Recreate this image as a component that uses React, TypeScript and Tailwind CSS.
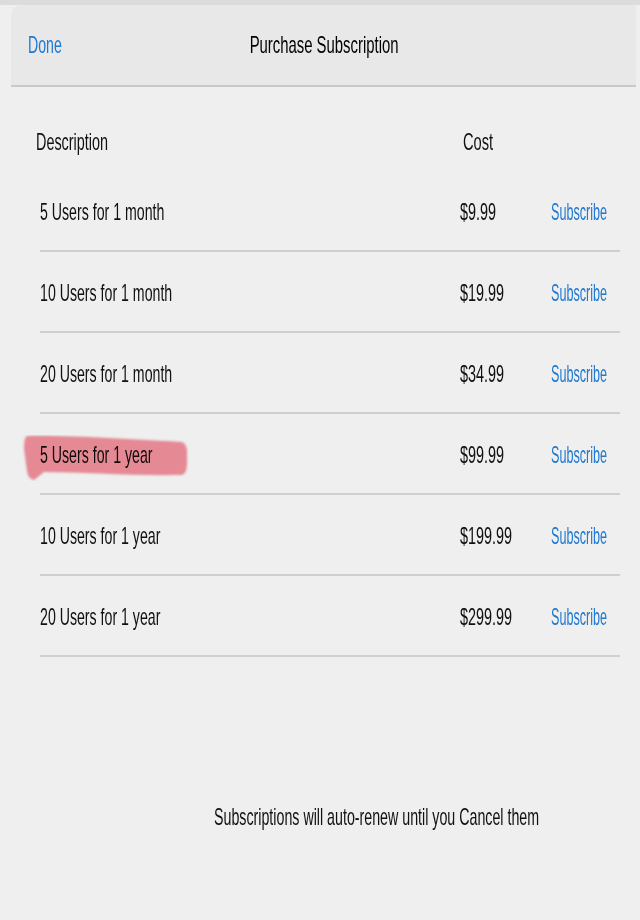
import React from 'react';

type Plan = { label: string; price: string; marked?: boolean };

const plans: Plan[] = [
  { label: '5 Users for 1 month', price: '$9.99' },
  { label: '10 Users for 1 month', price: '$19.99' },
  { label: '20 Users for 1 month', price: '$34.99' },
  { label: '5 Users for 1 year', price: '$99.99', marked: true },
  { label: '10 Users for 1 year', price: '$199.99' },
  { label: '20 Users for 1 year', price: '$299.99' },
];

// the screenshot's type is squeezed horizontally, so each label is narrowed
const Narrow: React.FC<{ children: React.ReactNode; className?: string; squeeze?: string }> = ({
  children,
  className = '',
  squeeze = 'scale-x-[0.59]',
}) => (
  <span className={`inline-block whitespace-nowrap text-[24px] leading-[28px] ${squeeze} ${className}`}>
    {children}
  </span>
);

const Marker: React.FC = () => (
  <svg
    className="absolute left-[-18px] top-[21px] w-[168px] h-[46px] pointer-events-none mix-blend-multiply"
    viewBox="0 0 168 46"
  >
    <defs>
      <filter id="soft">
        <feGaussianBlur stdDeviation="1" />
      </filter>
    </defs>
    <path
      d="M5,1 C50,0 120,5 160,7 Q166,9 165,22 Q166,38 160,40 C110,41 60,37 22,37 L12,45 Q6,44 5,36 L2,14 Q2,2 5,1 Z"
      fill="#f26a7c"
      fillOpacity="0.72"
      filter="url(#soft)"
    />
  </svg>
);

export default function App() {
  return (
    <div className="w-[640px] h-[920px] bg-[#eeefee] text-[#111] font-['Liberation_Sans',_Arial,_sans-serif] overflow-hidden">
      <div className="h-[5px] bg-[#dcdcdc]" />

      <div className="ml-[11px] mr-[4px] h-[82px] bg-[#e8e8e8] rounded-tl-[10px] border-b-2 border-[#c9c9c9] flex items-center">
        <div className="flex-1 basis-0 pl-[17px]">
          <Narrow className="origin-left text-[#1f78d1]">Done</Narrow>
        </div>
        <Narrow className="origin-center text-black" squeeze="scale-x-[0.62]">
          Purchase Subscription
        </Narrow>
        <div className="flex-1 basis-0 pl-[16px]" />
      </div>

      <div className="pt-[41px] pb-[14px] pl-[36px] flex">
        <div className="w-[427px] shrink-0">
          <Narrow className="origin-left" squeeze="scale-x-[0.6]">Description</Narrow>
        </div>
        <Narrow className="origin-left" squeeze="scale-x-[0.61]">Cost</Narrow>
      </div>

      <div className="ml-[40px] w-[580px]">
        {plans.map((p) => (
          <div key={p.label} className="relative h-[81px] pt-[3px] flex items-center border-b-2 border-[#cfcfcf]">
            <div className="w-[420px] shrink-0">
              <Narrow className="origin-left">{p.label}</Narrow>
            </div>
            <div className="w-[91px] shrink-0">
              <Narrow className="origin-left" squeeze="scale-x-[0.6]">{p.price}</Narrow>
            </div>
            <Narrow className="origin-left text-[#1f78d1]" squeeze="scale-x-[0.525]">
              Subscribe
            </Narrow>
            {p.marked && <Marker />}
          </div>
        ))}
      </div>

      <div className="mt-[146px] pl-[214px]">
        <Narrow className="origin-left" squeeze="scale-x-[0.593]">
          Subscriptions will auto-renew until you Cancel them
        </Narrow>
      </div>
    </div>
  );
}
